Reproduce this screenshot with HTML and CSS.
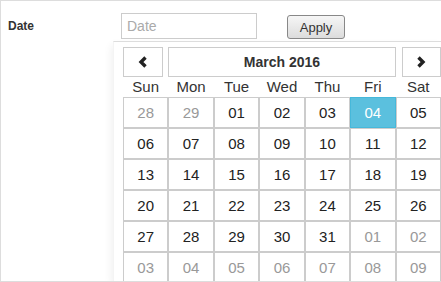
FILE: index.html
```html
<!doctype html>
<html lang="en">

<head>
  <meta charset="utf-8">
  <title>Date filter</title>
  <link rel="stylesheet" href="styles.css">
</head>

<body>
  <div id="panel">
    <div class="row">
      <label class="lbl" for="date">Date</label>
      <input type="text" id="date" class="field" placeholder="Date">
      <button class="apply">Apply</button>
    </div>

    <div class="picker">
      <div class="cal">
        <button class="nav prev"><svg width="10" height="14" viewBox="0 0 10 14"><polyline points="7.5,2.5 3,7 7.5,11.5" fill="none" stroke="#222" stroke-width="3.4"/></svg></button>
        <div class="title">March 2016</div>
        <button class="nav next"><svg width="10" height="14" viewBox="0 0 10 14"><polyline points="2.5,2.5 7,7 2.5,11.5" fill="none" stroke="#222" stroke-width="3.4"/></svg></button>

        <div class="dow">Sun</div><div class="dow">Mon</div><div class="dow">Tue</div><div class="dow">Wed</div><div class="dow">Thu</div><div class="dow">Fri</div><div class="dow">Sat</div>

        <div class="day old">28</div><div class="day old">29</div><div class="day">01</div><div class="day">02</div><div class="day">03</div><div class="day sel">04</div><div class="day">05</div>
        <div class="day">06</div><div class="day">07</div><div class="day">08</div><div class="day">09</div><div class="day">10</div><div class="day">11</div><div class="day">12</div>
        <div class="day">13</div><div class="day">14</div><div class="day">15</div><div class="day">16</div><div class="day">17</div><div class="day">18</div><div class="day">19</div>
        <div class="day">20</div><div class="day">21</div><div class="day">22</div><div class="day">23</div><div class="day">24</div><div class="day">25</div><div class="day">26</div>
        <div class="day">27</div><div class="day">28</div><div class="day">29</div><div class="day">30</div><div class="day">31</div><div class="day old">01</div><div class="day old">02</div>
        <div class="day old">03</div><div class="day old">04</div><div class="day old">05</div><div class="day old">06</div><div class="day old">07</div><div class="day old">08</div><div class="day old">09</div>
      </div>
    </div>
  </div>
</body>

</html>
```

FILE: styles.css
```css
body { margin: 0; font-family: "Liberation Sans", Arial, sans-serif; color: #333; background: #fff; }
#panel { position: relative; height: 280px; border: 1px solid #ddd; border-right: 0; overflow: hidden; }
.row { display: flex; align-items: center; padding: 12px 0 0 7px; height: 26px; }
.lbl { font-size: 12px; font-weight: bold; width: 113px; }
.field { box-sizing: border-box; width: 136px; height: 26px; border: 1px solid #ccc; padding: 0 5px; font: 14px "Liberation Sans", Arial, sans-serif; color: #333; }
.field::placeholder { color: #aaa; }
.apply { margin-left: 30px; width: 58px; height: 24px; margin-top: 2px; border: 1px solid #888; border-radius: 3px; background: linear-gradient(#f6f6f6, #dcdcdc); font: 13px "Liberation Sans", Arial, sans-serif; color: #333; padding: 0; }

.picker { position: absolute; top: 40px; left: 112px; right: 0; bottom: 0; background: #fff; border-top: 1px solid #ddd; border-left: 1px solid #f4f4f4; box-shadow: -2px 4px 8px rgba(0,0,0,.06); padding: 5px 0 0 9px; }
.cal { display: grid; width: 318px; grid-template-columns: repeat(7, 1fr); grid-template-rows: 30px 20px; grid-auto-rows: 31px; }
.nav { box-sizing: border-box; width: 40px; height: 30px; border: 1px solid #ccc; background: #fff; padding: 0; display: flex; align-items: center; justify-content: center; }
.prev { justify-self: start; }
.next { justify-self: end; width: 39px; }
.title { grid-column: 2 / 7; border: 1px solid #ccc; display: flex; align-items: center; justify-content: center; font-size: 14px; font-weight: bold; }
.dow { text-align: center; font-size: 15px; line-height: 20px; }
.day { border: 1px solid #ccc; display: flex; align-items: center; justify-content: center; font-size: 15px; color: #222; }
.old { color: #999; }
.sel { background: #5bc0de; border-color: #46b8da; color: #fff; }
```
